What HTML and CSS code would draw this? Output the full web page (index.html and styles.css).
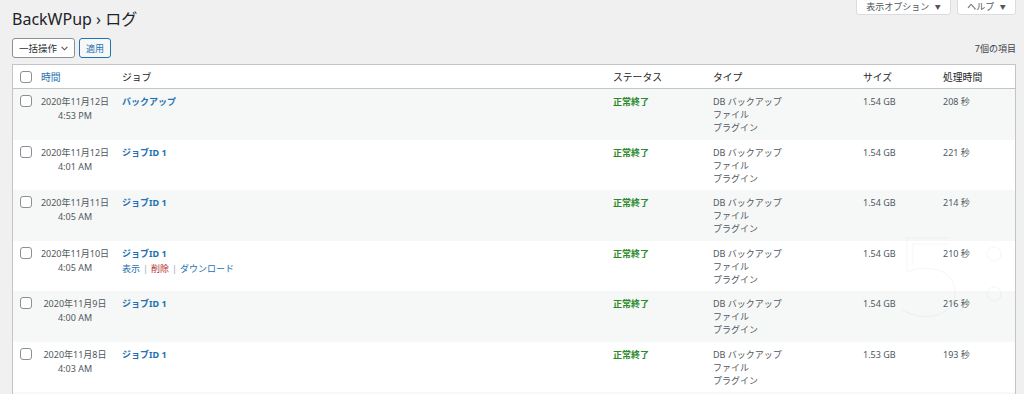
FILE: index.html
```html
<!DOCTYPE html>
<html lang="ja">
<head>
  <meta charset="UTF-8">
  <meta name="viewport" content="width=device-width, initial-scale=1.0">
  <title>BackWPup › ログ</title>
  <link rel="stylesheet" href="styles.css">
</head>
<body>
  <div class="wrap">
    <div class="top">
      <h1 class="page-title">BackWPup › ログ</h1>
      <div class="screen-meta">
        <span class="meta-tab">表示オプション <i>▼</i></span>
        <span class="meta-tab">ヘルプ <i>▼</i></span>
      </div>
    </div>

    <div class="tablenav">
      <div class="bulk">
        <span class="select">一括操作
          <svg width="7" height="5" viewBox="0 0 7 5"><path d="M0.6 0.8 L3.5 3.8 L6.4 0.8" fill="none" stroke="#50575e" stroke-width="1.1"/></svg>
        </span>
        <span class="apply">適用</span>
      </div>
      <span class="count">7個の項目</span>
    </div>

    <div class="table-box">
      <table class="logs">
        <colgroup>
          <col class="c-check">
          <col class="c-date">
          <col class="c-job">
          <col class="c-status">
          <col class="c-type">
          <col class="c-size">
          <col class="c-time">
        </colgroup>
        <thead>
          <tr>
            <th><span class="check"></span></th>
            <th class="th-date"><a href="#">時間</a></th>
            <th>ジョブ</th>
            <th>ステータス</th>
            <th>タイプ</th>
            <th>サイズ</th>
            <th>処理時間</th>
          </tr>
        </thead>
        <tbody>
          <tr>
            <td><span class="check"></span></td>
            <td class="date">2020年11月12日<br>4:53 PM</td>
            <td class="job"><a href="#">バックアップ</a></td>
            <td class="status">正常終了</td>
            <td class="type">DB バックアップ<br>ファイル<br>プラグイン</td>
            <td>1.54 GB</td>
            <td>208 秒</td>
          </tr>
          <tr>
            <td><span class="check"></span></td>
            <td class="date">2020年11月12日<br>4:01 AM</td>
            <td class="job"><a href="#">ジョブID 1</a></td>
            <td class="status">正常終了</td>
            <td class="type">DB バックアップ<br>ファイル<br>プラグイン</td>
            <td>1.54 GB</td>
            <td>221 秒</td>
          </tr>
          <tr>
            <td><span class="check"></span></td>
            <td class="date">2020年11月11日<br>4:05 AM</td>
            <td class="job"><a href="#">ジョブID 1</a></td>
            <td class="status">正常終了</td>
            <td class="type">DB バックアップ<br>ファイル<br>プラグイン</td>
            <td>1.54 GB</td>
            <td>214 秒</td>
          </tr>
          <tr>
            <td><span class="check"></span></td>
            <td class="date">2020年11月10日<br>4:05 AM</td>
            <td class="job">
              <a href="#">ジョブID 1</a>
              <div class="row-actions"><a href="#">表示</a><span class="sep">|</span><a href="#" class="delete">削除</a><span class="sep">|</span><a href="#">ダウンロード</a></div>
            </td>
            <td class="status">正常終了</td>
            <td class="type">DB バックアップ<br>ファイル<br>プラグイン</td>
            <td>1.54 GB</td>
            <td>210 秒</td>
          </tr>
          <tr>
            <td><span class="check"></span></td>
            <td class="date">2020年11月9日<br>4:00 AM</td>
            <td class="job"><a href="#">ジョブID 1</a></td>
            <td class="status">正常終了</td>
            <td class="type">DB バックアップ<br>ファイル<br>プラグイン</td>
            <td>1.54 GB</td>
            <td>216 秒</td>
          </tr>
          <tr>
            <td><span class="check"></span></td>
            <td class="date">2020年11月8日<br>4:03 AM</td>
            <td class="job"><a href="#">ジョブID 1</a></td>
            <td class="status">正常終了</td>
            <td class="type">DB バックアップ<br>ファイル<br>プラグイン</td>
            <td>1.53 GB</td>
            <td>193 秒</td>
          </tr>
          <!-- 7件目は画面の外 -->
          <tr class="next-row"><td colspan="7"></td></tr>
        </tbody>
      </table>
      <!-- 薄い透かし -->
      <svg class="watermark" width="130" height="100" viewBox="0 0 130 100">
        <path d="M63 8 H22 V42 C40 34 70 38 70 62 C70 86 40 93 17 80" fill="none" stroke="rgba(0,0,0,0.035)" stroke-width="1.2"/>
        <path d="M63 14 H28 V36" fill="none" stroke="rgba(0,0,0,0.03)" stroke-width="1"/>
        <circle cx="109" cy="24" r="7" fill="none" stroke="rgba(0,0,0,0.035)" stroke-width="1.2"/>
        <circle cx="109" cy="64" r="7" fill="none" stroke="rgba(0,0,0,0.035)" stroke-width="1.2"/>
      </svg>
    </div>
  </div>
</body>
</html>
```
FILE: styles.css
```css
*{margin:0;padding:0;box-sizing:border-box;}

body {
  background: #f0f0f1;
  color: #3c434a;
  font-family: "Noto Sans", "Noto Sans CJK JP", sans-serif;
  font-size: 9px;
}
a {color: #2271b1; text-decoration: none;}

.wrap {padding: 0 8px 0 12px;}

/* タイトル・画面オプション */
.top {
  display: flex;
  justify-content: space-between;
  align-items: flex-start;
  height: 38px;
}
.page-title {
  padding-top: 9px;
  font-size: 16px;
  line-height: 20px;
  font-weight: 400;
  color: #1d2327;
}
.screen-meta {display: flex; gap: 6px;}
.meta-tab {
  display: block;
  height: 16px;
  margin-top: -1px;
  padding: 0 6px;
  background: #fff;
  border: 1px solid #dcdcde;
  border-radius: 0 0 3px 3px;
  font-size: 9px;
  line-height: 14px;
  color: #50575e;
  white-space: nowrap;
  text-align: center;
}
.meta-tab i {font-style: normal; font-size: 6px; margin-left: 3px; vertical-align: 1px;}
.screen-meta .meta-tab:first-child {width: 95px;}
.screen-meta .meta-tab:last-child {width: 59px;}

/* 一括操作 */
.tablenav {
  display: flex;
  justify-content: space-between;
  align-items: center;
  height: 20px;
  margin-bottom: 6px;
}
.bulk {display: flex; gap: 4px;}
.select {
  display: flex;
  align-items: center;
  gap: 4px;
  width: 63px;
  height: 20px;
  padding: 0 5px 0 6px;
  background: #fff;
  border: 1px solid #8c8f94;
  border-radius: 3px;
  font-size: 9.5px;
  color: #2c3338;
  white-space: nowrap;
}
.apply {
  display: flex;
  align-items: center;
  justify-content: center;
  width: 32px;
  height: 20px;
  background: #f6f7f7;
  border: 1px solid #2271b1;
  border-radius: 3px;
  color: #2271b1;
  font-size: 9px;
}
.count {font-size: 9px; color: #3c434a;}

/* 一覧テーブル */
.table-box {position: relative;}
.logs {
  width: 100%;
  table-layout: fixed;
  border-spacing: 0;
  background: #fff;
  border: 1px solid #c3c4c7;
}
.c-check {width: 22px;}
.c-date {width: 80px;}
.c-job {width: 491px;}
.c-status {width: 100px;}
.c-type {width: 150px;}
.c-size {width: 80px;}

.logs th {
  height: 24px;
  padding: 0 7px;
  border-bottom: 1px solid #c3c4c7;
  text-align: left;
  font-weight: 400;
  font-size: 9.8px;
  color: #1d2327;
  vertical-align: middle;
}
.logs th.th-date {padding-left: 6px;}

.logs tbody tr {height: 50.5px;}
.logs tbody tr:nth-child(odd) {background: #f6f7f7;}
.logs td {
  padding: 6px 7px 0;
  vertical-align: top;
  line-height: 13px;
  color: #50575e;
}

.check {
  display: block;
  width: 12px;
  height: 12px;
  background: #fff;
  border: 1px solid #8c8f94;
  border-radius: 3px;
}

.logs td.date {
  padding-left: 0;
  padding-right: 0;
  text-align: center;
  line-height: 14px;
}
.logs td.job {line-height: 14px;}
.job > a {font-weight: 700;}
.row-actions {margin-top: 1px; line-height: 14px;}
.row-actions .sep {color: #a7aaad; margin: 0 3px;}
.row-actions .delete {color: #b32d2e;}

.logs td.status {color: #2a8a2a; font-weight: 700;}

.watermark {
  position: absolute;
  left: 873px;
  top: 166px;
  pointer-events: none;
}
```
